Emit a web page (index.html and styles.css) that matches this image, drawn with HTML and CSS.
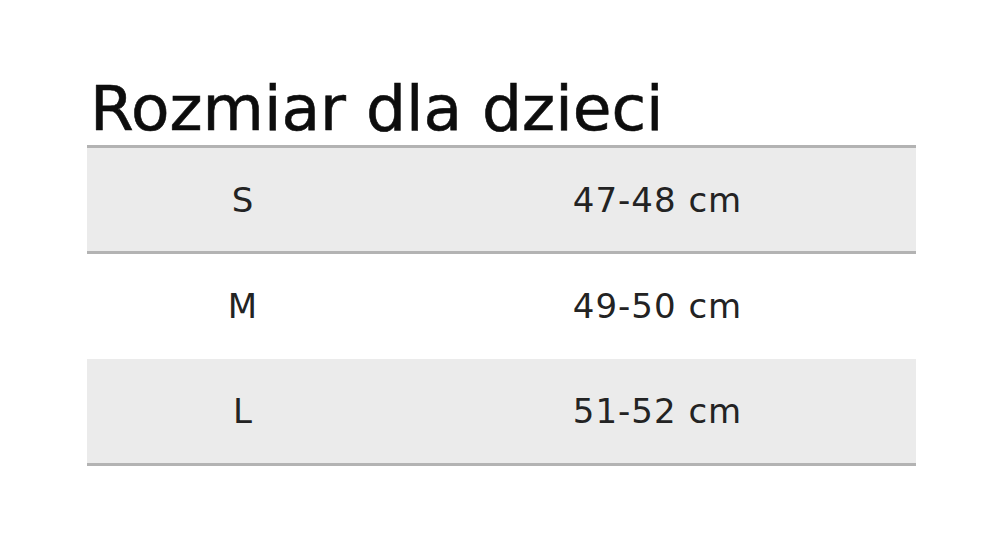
FILE: index.html
```html
<!DOCTYPE html>
<html lang="pl">

    <head>
        <meta charset="UTF-8">
        <meta name="viewport" content="width=device-width, initial-scale=1.0">
        <title>Rozmiar dla dzieci</title>
        <link rel="stylesheet" href="styles.css">
    </head>

    <body>

        <div class="holder">
            <h1 class="title">Rozmiar dla dzieci</h1>
            <table class="sizes">
                <tr class="row shade">
                    <td class="size">S</td>
                    <td class="val">47-48 cm</td>
                </tr>
                <tr class="row">
                    <td class="size">M</td>
                    <td class="val">49-50 cm</td>
                </tr>
                <tr class="row shade last">
                    <td class="size">L</td>
                    <td class="val">51-52 cm</td>
                </tr>
            </table>
        </div>

    </body>

</html>
```

FILE: styles.css
```css
:root {
    --bg: #ffffff;
    --shade: #ebebeb;
    --line: #b3b3b3;
    --ink: #0d0d0d;
    --text: #232323;
}

body {
    margin: 0;
    background-color: var(--bg);
    font-family: 'DejaVu Sans', sans-serif;
}

.holder {
    padding-top: 77px;
    padding-left: 87px;
    width: 829px;
}

.title {
    margin: 0 0 5px 3px;
    font-size: 63px;
    line-height: 63px;
    font-weight: normal;
    color: var(--ink);
    -webkit-text-stroke: 0.6px var(--ink);
}

.sizes {
    width: 829px;
    border-collapse: collapse;
    border-top: 3px solid var(--line);
}

.row {
    height: 106px;
}

.shade {
    background: var(--shade);
}

.row:first-child,
.last {
    border-bottom: 3px solid var(--line);
}

.size,
.val {
    padding: 0;
    text-align: center;
    font-size: 34px;
    color: var(--text);
    letter-spacing: 1px;
}

.size {
    width: 312px;
}
```
